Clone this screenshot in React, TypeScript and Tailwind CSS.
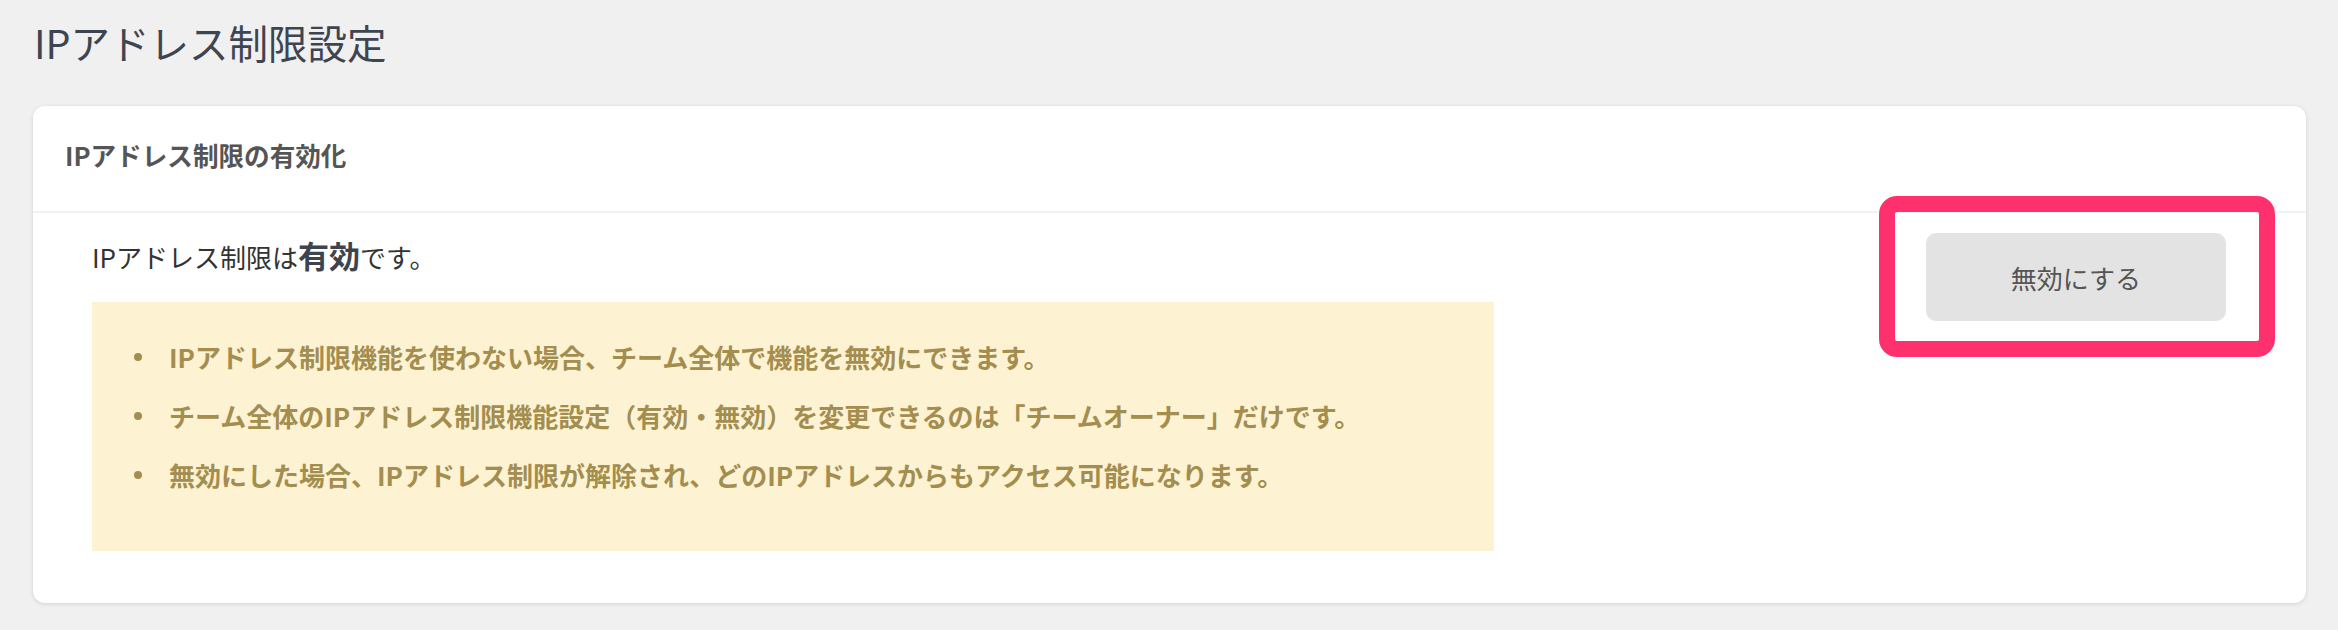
import React from 'react';

const notes = [
  'IPアドレス制限機能を使わない場合、チーム全体で機能を無効にできます。',
  'チーム全体のIPアドレス制限機能設定（有効・無効）を変更できるのは「チームオーナー」だけです。',
  '無効にした場合、IPアドレス制限が解除され、どのIPアドレスからもアクセス可能になります。',
];

const font = { fontFamily: '"Noto Sans CJK JP", "Noto Sans", sans-serif' };

export default function App() {
  return (
    <div className="min-h-[630px] bg-[#f0f0f0] pl-[33px] pr-[32px] pt-[16px]" style={font}>
      <h1 className="mb-[38px] pl-[1px] text-[39.5px] leading-[52px] font-normal text-[#3f4550]">
        IPアドレス制限設定
      </h1>

      <section className="rounded-[12px] bg-white shadow-[0_1px_4px_rgba(0,0,0,0.13)]">
        <header className="flex h-[107px] items-center border-b-2 border-[#f2f2f2] pb-[7px] pl-[32px]">
          <h2 className="text-[25.6px] font-bold text-[#555555]">IPアドレス制限の有効化</h2>
        </header>

        <div className="flex justify-between pb-[52px] pl-[59px] pr-[80px] pt-[20px]">
          <div>
            <p className="text-[26px] leading-[44px] text-[#333333]">
              IPアドレス制限は<strong className="text-[31px] font-bold text-[#3d4450]">有効</strong>です。
            </p>
            <ul className="mt-[23px] flex w-[1402px] flex-col gap-[21px] bg-[#fdf3d3] pb-[57px] pl-[42px] pt-[36px]">
              {notes.map((note) => (
                <li key={note} className="flex items-center text-[26px] leading-[38px] font-bold text-[#a38d4f]">
                  <span className="mr-[27px] h-[8px] w-[8px] shrink-0 rounded-full bg-[#a38d4f]" />
                  {note}
                </li>
              ))}
            </ul>
          </div>

          <div className="relative h-[88px]">
            <button
              type="button"
              className="h-[88px] w-[300px] rounded-[10px] bg-[#e3e3e3] text-[26px] text-[#555555]"
            >
              無効にする
            </button>
            {/* annotation frame */}
            <span className="pointer-events-none absolute -bottom-[36px] -left-[47px] -right-[49px] -top-[37px] rounded-[18px] border-[16px] border-[#fe316e]" />
          </div>
        </div>
      </section>
    </div>
  );
}
